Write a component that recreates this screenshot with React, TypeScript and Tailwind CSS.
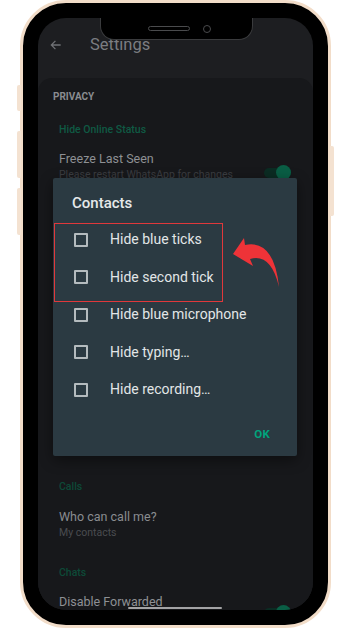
import React from 'react';

const ROWS = [
  'Hide blue ticks',
  'Hide second tick',
  'Hide blue microphone',
  'Hide typing…',
  'Hide recording…',
];

const font = { fontFamily: 'Roboto, "Noto Sans", sans-serif' };

const Toggle: React.FC<{ className?: string }> = ({ className = '' }) => (
  <div className={`relative w-[27px] h-[15px] flex items-center ${className}`}>
    <div className="w-full h-[10px] rounded-full bg-[#0b2c23]" />
    <div className="absolute right-0 w-[15px] h-[15px] rounded-full bg-[#0a5e45]" />
  </div>
);

const ContactsDialog: React.FC = () => (
  <div className="absolute left-[15px] top-[160px] w-[244px] h-[278px] bg-[#2b3a42] rounded-[2px] shadow-[0_4px_14px_rgba(0,0,0,0.45)] flex flex-col">
    <div className="pl-[19px] pt-[16px] text-[15px] leading-[18px] font-medium text-[#e6e9ea]">Contacts</div>
    <div className="flex flex-col mt-[9px]">
      {ROWS.map(label => (
        <div key={label} className="flex items-center h-[37.5px] pl-[21px]">
          <div className="w-[14px] h-[14px] rounded-[1px] border-2 border-[#b4bbbe]" />
          <span className="ml-[22px] text-[14px] text-[#e2e6e7]">{label}</span>
        </div>
      ))}
    </div>
    <div className="flex justify-end pr-[27px] mt-[17px]">
      <span className="text-[11.5px] font-bold text-[#00a37c] tracking-wide">OK</span>
    </div>

    {/* annotation */}
    <div className="absolute left-[1px] top-[45px] w-[169px] h-[79px] border-[1.5px] border-[#e0383b]" />
    <svg className="absolute left-[174px] top-[56px]" width="60" height="60" viewBox="0 0 60 60">
      <path d="M6,20 L17,4 L18,11 Q47,5 52,53 Q44,19 23,25 L26,32 Z" fill="#ee3338" />
    </svg>
  </div>
);

export default function App() {
  return (
    <div className="w-[350px] h-[630px] bg-white" style={font}>
      <div className="relative ml-[20px] w-[311px] h-[628px] rounded-[46px] border-[3px] border-[#f2ddc9] bg-black p-[15px]">
        {/* side buttons */}
        <div className="absolute -left-[6px] top-[82px] w-[4px] h-[26px] rounded-l-[2px] bg-[#f4e2d1]" />
        <div className="absolute -left-[6px] top-[128px] w-[4px] h-[47px] rounded-l-[2px] bg-[#f4e2d1]" />
        <div className="absolute -left-[6px] top-[185px] w-[4px] h-[47px] rounded-l-[2px] bg-[#f4e2d1]" />
        <div className="absolute -right-[6px] top-[143px] w-[4px] h-[70px] rounded-r-[2px] bg-[#f4e2d1]" />

        <div className="relative w-full h-full rounded-[28px] overflow-hidden bg-[#1d1e21] flex flex-col">
          {/* header */}
          <div className="h-[60px] shrink-0 flex items-center">
            <svg className="ml-[11px] mt-[-6px]" width="14" height="14" viewBox="0 0 24 24" fill="none" stroke="#6f7175" strokeWidth="2.2">
              <path d="M20 12H4M11 5l-7 7 7 7" />
            </svg>
            <span className="ml-[27px] mt-[-6px] text-[16.5px] text-[#7b7d81]">Settings</span>
          </div>

          {/* list */}
          <div className="flex-1 rounded-t-[14px] bg-[#17181b] flex flex-col">
            <div className="mt-[13px] pl-[15px] text-[10px] leading-[12px] font-bold text-[#8a8c90]">PRIVACY</div>
            <div className="mt-[20px] pl-[21px] text-[10.5px] leading-[13px] font-medium text-[#0f5a44]">Hide Online Status</div>
            <div className="flex items-start justify-between pl-[21px] pr-[22px]">
              <div className="flex flex-col">
                <div className="mt-[15px] text-[12.5px] leading-[15px] text-[#8e9094]">Freeze Last Seen</div>
                <div className="mt-[2px] text-[10.5px] leading-[13px] text-[#3b3d41]">Please restart WhatsApp for changes</div>
              </div>
              <Toggle className="mt-[29px]" />
            </div>

            <div className="mt-[299px] pl-[21px] text-[10.5px] leading-[13px] font-medium text-[#0d4a38]">Calls</div>
            <div className="mt-[16px] pl-[21px] text-[12.5px] leading-[15px] text-[#8a8c90]">Who can call me?</div>
            <div className="mt-[2px] pl-[21px] text-[10.5px] leading-[13px] text-[#4a4c50]">My contacts</div>
            <div className="mt-[27px] pl-[21px] text-[10.5px] leading-[13px] font-medium text-[#0d4a38]">Chats</div>
            <div className="flex items-start justify-between pl-[21px] pr-[22px]">
              <div className="mt-[15px] text-[12.5px] leading-[15px] text-[#8e9094]">Disable Forwarded</div>
              <Toggle className="mt-[26px]" />
            </div>
          </div>

          {/* notch */}
          <div className="absolute left-[62px] top-0 w-[153px] h-[22px] bg-black rounded-b-[14px] border-b border-x border-[#3a3b3d] flex items-center justify-center">
            <div className="w-[42px] h-[5px] rounded-full border border-[#4a4b4d] ml-[6px]" />
            <div className="w-[8px] h-[8px] rounded-full border border-[#4a4b4d] ml-[13px]" />
          </div>

          <ContactsDialog />

          {/* home indicator */}
          <div className="absolute left-[90px] bottom-[1px] w-[94px] h-[2px] rounded-full bg-[#a3a3a5]" />
        </div>
      </div>
    </div>
  );
}
